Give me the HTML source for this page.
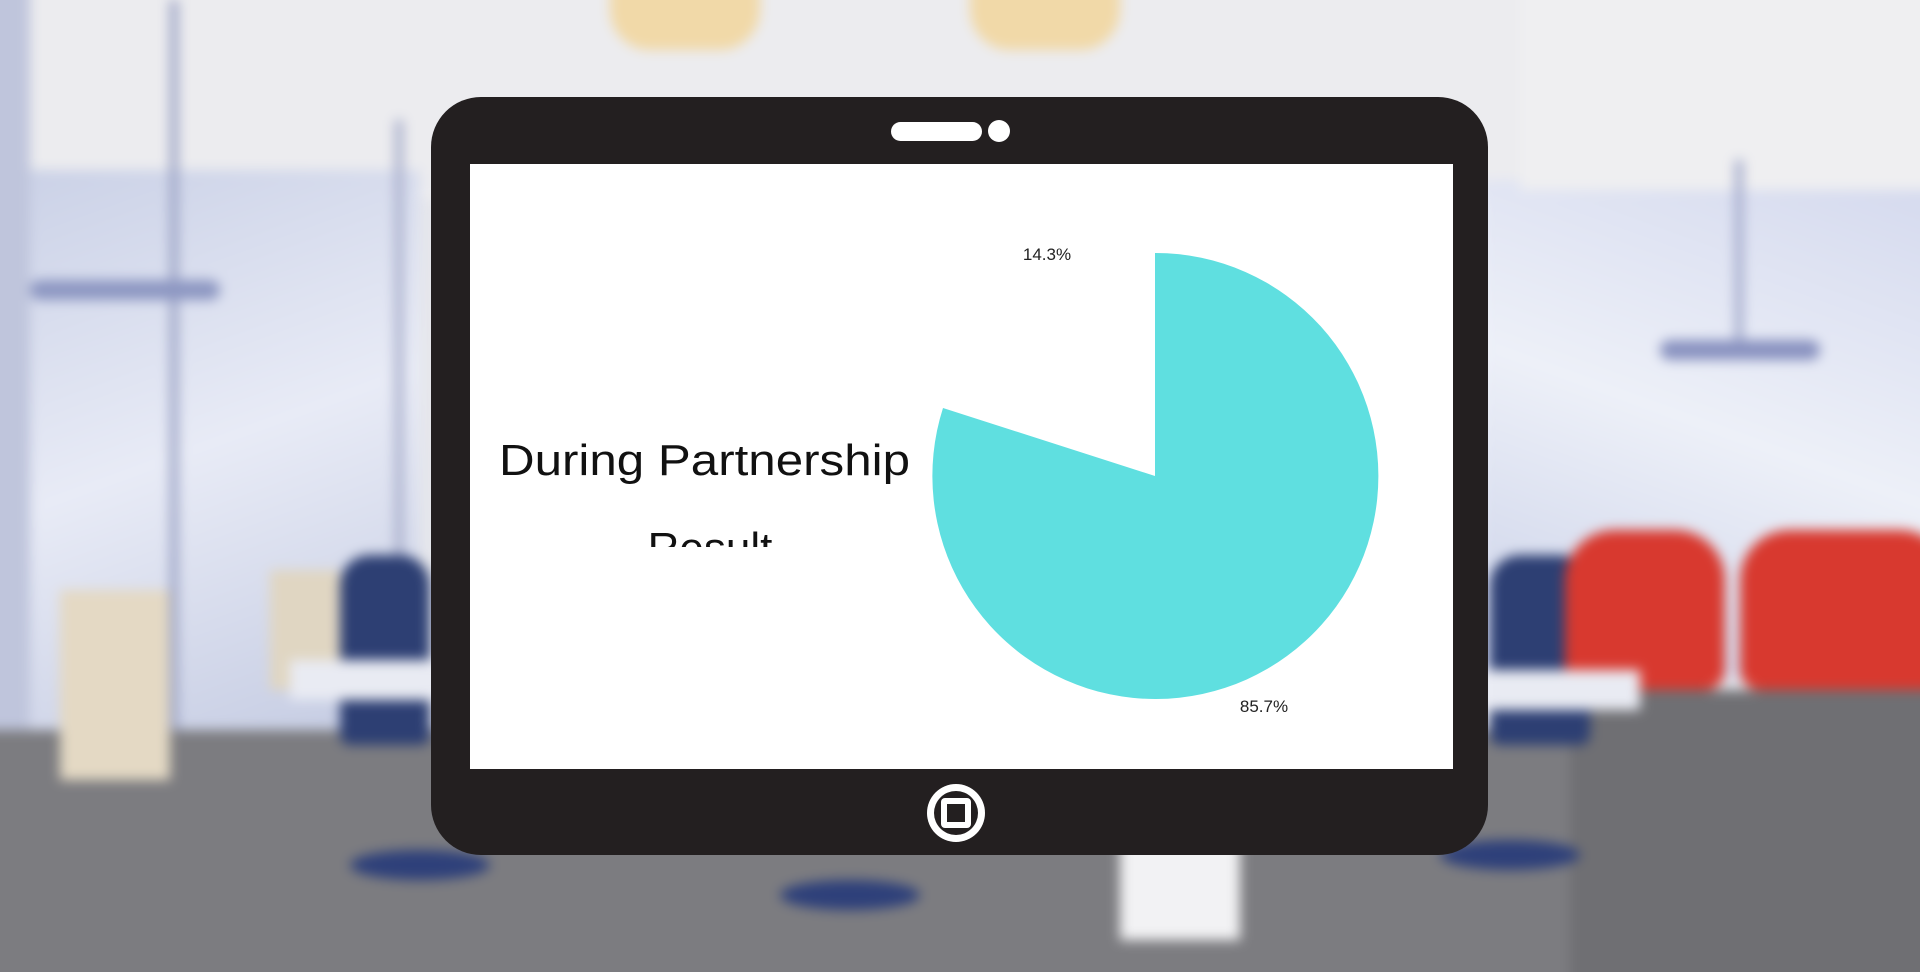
<!DOCTYPE html>
<html><head><meta charset="utf-8"><style>
html,body{margin:0;padding:0;width:1920px;height:972px;overflow:hidden;background:#e6e7ec;font-family:"Liberation Sans",sans-serif}
#wrap{position:relative;width:1920px;height:972px;overflow:hidden}
.bg{position:absolute;left:0;top:0;width:1920px;height:972px;filter:blur(6px)}
.bg>div{position:absolute}
</style></head><body><div id="wrap">
<div class="bg">
  <div style="left:-30px;top:-30px;width:1980px;height:230px;background:#ececef"></div>
  <div style="left:-30px;top:170px;width:450px;height:560px;background:linear-gradient(160deg,#c9d0e6,#e8ebf6 50%,#c4cbe2)"></div>
  <div style="left:1480px;top:180px;width:470px;height:500px;background:linear-gradient(200deg,#d4d9ee,#edf0f8 50%,#c9d0e8)"></div>
  <div style="left:1520px;top:-30px;width:430px;height:220px;background:#efeff1"></div>
  <div style="left:-30px;top:-30px;width:60px;height:1032px;background:#bfc5dc"></div>
  <div style="left:170px;top:0;width:8px;height:800px;background:#9aa2c4"></div>
  <div style="left:395px;top:120px;width:8px;height:680px;background:#a8aecb"></div>
  <div style="left:30px;top:280px;width:190px;height:20px;border-radius:10px;background:#8d97c2"></div>
  <div style="left:1660px;top:340px;width:160px;height:20px;border-radius:10px;background:#8992c0"></div>
  <div style="left:1735px;top:160px;width:8px;height:180px;background:#a3aacb"></div>
  <div style="left:610px;top:-30px;width:150px;height:80px;background:#f1d9a8;border-radius:0 0 40px 40px"></div>
  <div style="left:970px;top:-30px;width:150px;height:80px;background:#f1d9a8;border-radius:0 0 40px 40px"></div>
  <div style="left:-30px;top:730px;width:1980px;height:272px;background:#7c7c80"></div>
  <div style="left:1570px;top:690px;width:380px;height:312px;background:#6f6f73"></div>
  <div style="left:60px;top:590px;width:110px;height:190px;background:#e4d9c4"></div>
  <div style="left:270px;top:570px;width:70px;height:120px;background:#e0d6c2"></div>
  <div style="left:340px;top:555px;width:90px;height:190px;border-radius:30px 30px 10px 10px;background:#2d3f73"></div>
  <div style="left:1490px;top:555px;width:100px;height:190px;border-radius:30px 30px 10px 10px;background:#2d3f73"></div>
  <div style="left:1565px;top:530px;width:160px;height:160px;border-radius:50px 50px 20px 20px;background:#d8392f"></div>
  <div style="left:1740px;top:530px;width:210px;height:160px;border-radius:50px 50px 20px 20px;background:#d8392f"></div>
  <div style="left:290px;top:660px;width:160px;height:40px;background:#e9ebf3"></div>
  <div style="left:1480px;top:670px;width:160px;height:40px;background:#e9ebf3"></div>
  <div style="left:350px;top:850px;width:140px;height:30px;border-radius:50%;background:#2e407a"></div>
  <div style="left:780px;top:880px;width:140px;height:30px;border-radius:50%;background:#2e407a"></div>
  <div style="left:1120px;top:840px;width:120px;height:100px;background:#f2f2f4"></div>
  <div style="left:1440px;top:840px;width:140px;height:30px;border-radius:50%;background:#2e407a"></div>
</div>
<svg style="position:absolute;left:0;top:0" width="1920" height="972">
  <rect x="431" y="97" width="1057" height="758" rx="50" fill="#231f20"/>
  <rect x="470" y="164" width="983" height="605" fill="#fff"/>
  <rect x="891" y="122" width="91" height="19" rx="9.5" fill="#fff"/>
  <circle cx="999" cy="131" r="11" fill="#fff"/>
  <circle cx="956" cy="813" r="29" fill="#fff"/>
  <circle cx="956" cy="813" r="22" fill="#231f20"/>
  <rect x="941" y="798" width="30" height="30" rx="4" fill="#fff"/>
  <rect x="947" y="804" width="18" height="18" fill="#231f20"/>
  <path d="M1155,476 L1155,253 A223,223 0 1,1 943,408 Z" fill="#5fdfe0"/>
  <text x="1047" y="260" font-size="17" text-anchor="middle" fill="#222" font-family="Liberation Sans">14.3%</text>
  <text x="1264" y="712" font-size="17" text-anchor="middle" fill="#222" font-family="Liberation Sans">85.7%</text>
  <text x="499" y="475" font-size="44" textLength="411" lengthAdjust="spacingAndGlyphs" fill="#111" font-family="Liberation Sans">During Partnership</text>
  <clipPath id="c"><rect x="600" y="500" width="200" height="47"/></clipPath>
  <text x="710" y="563" font-size="44" text-anchor="middle" fill="#111" clip-path="url(#c)" font-family="Liberation Sans">Result</text>
</svg>
</div></body></html>
